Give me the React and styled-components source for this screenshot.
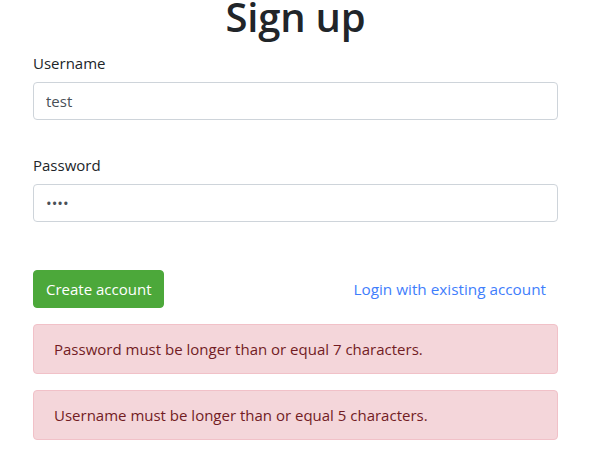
import React from 'react'
import styled, { createGlobalStyle } from 'styled-components'

const GlobalStyle = createGlobalStyle`
    * { box-sizing: border-box; }
    body {
        margin: 0;
        background: #fff;
        font-family: 'Open Sans', 'Noto Sans', sans-serif;
        color: #212529;
    }
`

const errors = [
    'Password must be longer than or equal 7 characters.',
    'Username must be longer than or equal 5 characters.',
]

function App() {
    return (
        <>
            <GlobalStyle />
            <Page>
                <Title>Sign up</Title>
                <Field>
                    <Label>Username</Label>
                    <Input type="text" defaultValue="test" />
                </Field>
                <Field>
                    <Label>Password</Label>
                    <Input type="password" defaultValue="test" />
                </Field>
                <Actions>
                    <PrimaryButton>Create account</PrimaryButton>
                    <LinkButton>Login with existing account</LinkButton>
                </Actions>
                {errors.map(err => (
                    <Alert key={err}>{err}</Alert>
                ))}
            </Page>
        </>
    )
}

const Page = styled.div`
    width: 525px;
    margin-left: 33px;
    display: flex;
    flex-direction: column;
`

const Title = styled.h1`
    margin: 0 0 18px;
    text-align: center;
    font-size: 40px;
    font-weight: 600;
    line-height: 33px;
    color: #212529;
    letter-spacing: -0.2px;
`

const Field = styled.div`
    display: flex;
    flex-direction: column;
    margin-bottom: 33px;
`

const Label = styled.label`
    font-size: 15px;
    line-height: 24px;
    margin-bottom: 7px;
    color: #212529;
`

const Input = styled.input`
    height: 38px;
    width: 100%;
    padding: 6px 12px;
    border: 1px solid #ced4da;
    border-radius: 4px;
    font-family: inherit;
    font-size: 15px;
    color: #495057;
    outline: none;
`

const Actions = styled.div`
    display: flex;
    justify-content: space-between;
    align-items: center;
    margin-top: 15px;
    margin-bottom: 16px;
`

const PrimaryButton = styled.button`
    height: 38px;
    padding: 0 12px;
    border: 1px solid #4ca83a;
    border-radius: 4px;
    background: #4ca83a;
    color: #fff;
    font-family: inherit;
    font-size: 15px;
`

const LinkButton = styled.button`
    height: 38px;
    padding: 0 12px;
    border: 0;
    background: transparent;
    color: #3f7efc;
    font-family: inherit;
    font-size: 15.3px;
`

const Alert = styled.div`
    height: 50px;
    display: flex;
    align-items: center;
    padding: 0 20px;
    margin-bottom: 16px;
    border: 1px solid #f1c1c8;
    border-radius: 4px;
    background: #f4d6da;
    color: #721c24;
    font-size: 15px;
`

export default App
